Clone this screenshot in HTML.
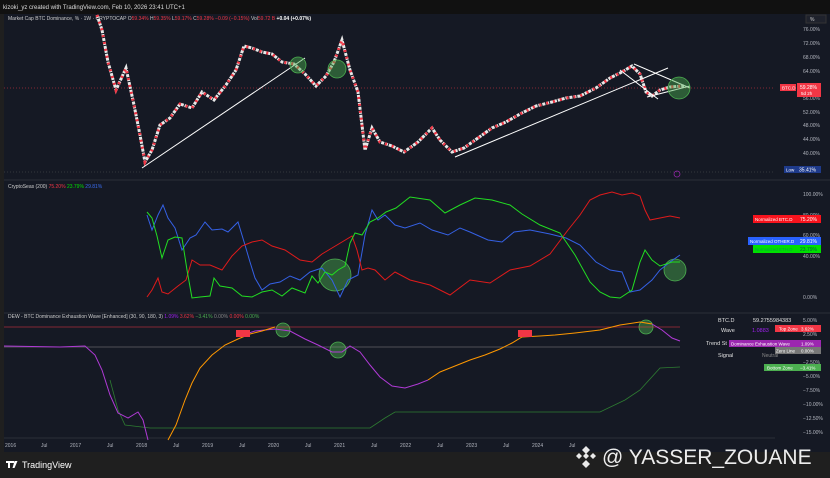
<!DOCTYPE html><html><head><style>
body{margin:0;width:830px;height:478px;background:#1e1e1e;overflow:hidden;font-family:"Liberation Sans",sans-serif}
svg{position:absolute;left:0;top:0}
text{font-family:"Liberation Sans",sans-serif}
</style></head><body>
<svg width="830" height="478" viewBox="0 0 830 478">
<rect x="0" y="0" width="830" height="478" fill="#1f1f1f"/>
<rect x="0" y="0" width="830" height="14" fill="#111"/>
<text x="3" y="9" font-size="6" fill="#ddd">kizoki_yz created with TradingView.com, Feb 10, 2026 23:41 UTC+1</text>
<rect x="4" y="14" width="826" height="438" fill="#151924"/>
<line x1="4" y1="180" x2="830" y2="180" fill="none" stroke="#2a2e39" stroke-width="1"/>
<line x1="4" y1="313" x2="830" y2="313" stroke="#2a2e39"/>
<line x1="4" y1="438" x2="775" y2="438" stroke="#2a2e39"/>
<text x="8" y="20" font-size="5" fill="#ccc">Market Cap BTC Dominance, % · 1W · CRYPTOCAP  <tspan fill="#ccc">O</tspan><tspan fill="#f23645">59.34%</tspan> H<tspan fill="#f23645">59.35%</tspan> L<tspan fill="#f23645">59.17%</tspan> C<tspan fill="#f23645">59.28%</tspan> <tspan fill="#f23645">−0.09 (−0.15%)</tspan> Vol<tspan fill="#f23645">59.72 B</tspan> <tspan fill="#fff" font-weight="bold">+0.04 (+0.07%)</tspan></text>
<rect x="806" y="15" width="20" height="8" fill="#1f222c" stroke="#333"/><text x="810" y="21" font-size="5" fill="#ccc">%</text>
<g font-size="5" fill="#b2b5be">
<text x="803" y="31">76.00%</text><text x="803" y="45">72.00%</text><text x="803" y="59">68.00%</text><text x="803" y="73">64.00%</text><text x="803" y="100">56.00%</text><text x="803" y="114">52.00%</text><text x="803" y="127">48.00%</text><text x="803" y="141">44.00%</text><text x="803" y="155">40.00%</text>
<text x="803" y="196">100.00%</text><text x="803" y="217">80.00%</text><text x="803" y="237">60.00%</text><text x="803" y="258">40.00%</text><text x="803" y="299">0.00%</text>
<text x="803" y="322">5.00%</text><text x="803" y="336">2.50%</text><text x="803" y="364">−2.50%</text><text x="803" y="378">−5.00%</text><text x="803" y="392">−7.50%</text><text x="803" y="406">−10.00%</text><text x="803" y="420">−12.50%</text><text x="803" y="434">−15.00%</text>
</g>
<line x1="4" y1="88" x2="775" y2="88" stroke="#f23645" stroke-width="0.5" stroke-dasharray="1,2"/>
<line x1="4" y1="172" x2="775" y2="172" stroke="#555" stroke-width="0.5" stroke-dasharray="1,2"/>
<rect x="780" y="84" width="16" height="7" fill="#f23645"/><text x="782" y="89.5" font-size="4.5" fill="#fff">BTC.D</text>
<rect x="797" y="83" width="24" height="14" fill="#f23645"/><text x="800" y="89" font-size="5" fill="#fff">59.28%</text><text x="801" y="95" font-size="4.5" fill="#fff">5d 2h</text>
<rect x="784" y="166" width="13" height="7" fill="#1e3a8a"/><text x="786" y="171.5" font-size="4.5" fill="#fff">Low</text>
<rect x="797" y="166" width="24" height="7" fill="#1e3a8a"/><text x="799" y="171.5" font-size="5" fill="#fff">35.41%</text>
<circle cx="677" cy="174" r="3" fill="none" stroke="#9c27b0" stroke-width="0.7"/>
<polyline fill="none" stroke="#e8e8e8" stroke-width="3" stroke-dasharray="3,1" points="97,15 102,30 108,62 116,90 126,68 134,105 140,135 145,162 152,150 160,125 170,118 180,104 192,108 202,92 214,100 226,85 236,70 244,46 252,48 262,52 272,54 282,62 294,64 305,74 316,86 326,76 334,62 342,40 350,70 358,92 365,150 372,128 380,142 392,146 404,152 418,142 432,128 440,140 452,152 464,148 478,138 492,128 506,122 520,114 536,106 552,102 566,98 580,96 596,88 610,78 622,72 632,66 640,74 646,92 652,96 660,90 670,87 684,86"/>
<polyline fill="none" stroke="#f23645" stroke-width="3" stroke-dasharray="2,5" points="97,15 102,30 108,62 116,90 126,68 134,105 140,135 145,162 152,150 160,125 170,118 180,104 192,108 202,92 214,100 226,85 236,70 244,46 252,48 262,52 272,54 282,62 294,64 305,74 316,86 326,76 334,62 342,40 350,70 358,92 365,150 372,128 380,142 392,146 404,152 418,142 432,128 440,140 452,152 464,148 478,138 492,128 506,122 520,114 536,106 552,102 566,98 580,96 596,88 610,78 622,72 632,66 640,74 646,92 652,96 660,90 670,87 684,86"/>
<g stroke="#fff" stroke-width="1" fill="none">
<line x1="142" y1="168" x2="305" y2="58"/>
<line x1="455" y1="157" x2="668" y2="68"/>
<line x1="634" y1="64" x2="690" y2="88"/>
<line x1="620" y1="70" x2="658" y2="99"/>
<line x1="647" y1="97" x2="690" y2="86"/>
</g>
<g fill="#4caf50" fill-opacity="0.45" stroke="#4caf50" stroke-width="0.8">
<circle cx="298" cy="65" r="8"/><circle cx="337" cy="69" r="9"/><circle cx="679" cy="88" r="11"/>
<circle cx="335" cy="275" r="16"/><circle cx="675" cy="270" r="11"/>
<circle cx="283" cy="330" r="7"/><circle cx="338" cy="350" r="8"/><circle cx="646" cy="327" r="7"/>
</g>
<text x="8" y="188" font-size="5" fill="#ccc">CryptoSeas (200)  <tspan fill="#f23645">75.20%</tspan> <tspan fill="#00e000">23.79%</tspan> <tspan fill="#3a6df0">29.81%</tspan></text>
<polyline fill="none" stroke="#3561e6" stroke-width="1" points="147,215 152,230 158,215 163,205 168,218 175,228 182,250 190,238 196,235 205,222 212,230 222,229 228,232 238,222 245,245 250,262 255,278 262,290 270,284 280,282 290,276 300,280 310,272 322,268 332,280 340,297 348,280 358,275 365,235 372,210 378,220 385,215 395,225 405,228 420,223 432,230 448,235 460,228 470,232 488,240 502,242 514,232 530,230 550,234 566,238 580,245 596,262 610,270 622,272 630,292 640,290 652,280 660,270 670,262 680,255"/>
<polyline fill="none" stroke="#e01b1b" stroke-width="1" points="147,297 152,290 158,278 162,292 168,294 178,286 186,280 192,260 200,265 210,265 222,270 232,256 242,246 252,242 262,240 272,246 285,250 300,260 312,262 322,254 332,248 342,242 352,236 357,250 362,270 368,268 375,270 385,280 395,272 410,280 430,285 450,295 470,280 490,283 510,270 530,266 550,254 568,230 580,215 590,200 600,195 612,192 622,195 632,193 640,196 645,210 650,220 660,218 670,216 680,218"/>
<polyline fill="none" stroke="#22dd22" stroke-width="1" points="147,212 152,218 157,236 162,258 168,240 175,237 182,238 187,270 192,298 200,297 210,296 214,278 220,286 232,288 242,296 252,297 262,292 272,290 282,296 292,288 305,293 312,276 318,283 325,272 332,275 338,270 345,266 350,243 355,233 362,235 370,222 378,218 386,212 396,208 410,197 430,200 445,213 460,205 475,198 492,200 510,205 522,214 540,225 560,233 575,255 590,282 600,292 610,297 620,298 632,290 640,262 645,250 652,260 660,266 672,262 680,262"/>
<rect x="748" y="237" width="50" height="8" fill="#2962ff"/><text x="750" y="243" font-size="4.5" fill="#fff">Normalized OTHER.D</text>
<rect x="798" y="237" width="23" height="8" fill="#2962ff"/><text x="800" y="243" font-size="5" fill="#fff">29.81%</text>
<rect x="753" y="245" width="45" height="8" fill="#00e000"/><text x="755" y="251" font-size="4.5" fill="#0a3">Normalized ETH.D</text>
<rect x="798" y="245" width="23" height="8" fill="#00e000"/><text x="800" y="251" font-size="5" fill="#063">23.79%</text>
<rect x="753" y="215" width="45" height="8" fill="#f7131d"/><text x="755" y="221" font-size="4.5" fill="#fff">Normalized BTC.D</text>
<rect x="798" y="215" width="23" height="8" fill="#f7131d"/><text x="800" y="221" font-size="5" fill="#fff">75.20%</text>
<text x="8" y="318" font-size="5" fill="#ccc">DEW - BTC Dominance Exhaustion Wave [Enhanced] (30, 90, 180, 3)  <tspan fill="#a020f0">1.09%</tspan> <tspan fill="#f23645">3.62%</tspan> <tspan fill="#4caf50">−3.41%</tspan> <tspan fill="#888">0.00%</tspan> <tspan fill="#f23645">0.00%</tspan> <tspan fill="#4caf50">0.00%</tspan></text>
<line x1="4" y1="327" x2="680" y2="327" stroke="#f23645" stroke-width="0.6"/>
<line x1="4" y1="347" x2="680" y2="347" stroke="#888" stroke-width="0.6"/>
<polyline fill="none" stroke="#2e7d32" stroke-width="0.8" points="110,380 118,410 125,425 150,428 370,428 385,418 395,412 420,412 600,412 625,400 640,390 660,368 680,367"/>
<polyline fill="none" stroke="#b03ad6" stroke-width="1" points="4,346 60,347 85,346 95,355 102,370 110,395 118,413 128,418 138,412 143,420 148,440"/>
<polyline fill="none" stroke="#b03ad6" stroke-width="1" points="240,336 255,331 275,329 290,331 305,339 318,345 332,352 342,352 350,346 360,352 370,365 380,377 392,386 405,388 418,384 428,380"/>
<polyline fill="none" stroke="#ff9800" stroke-width="1" points="168,440 176,425 185,400 192,383 200,368 212,355 225,345 238,339 250,334 262,331 275,327"/>
<polyline fill="none" stroke="#ff9800" stroke-width="1" points="428,380 440,372 455,366 470,360 485,355 500,349 512,343 522,337 540,336 555,335 575,333 600,330 620,325 640,322 652,324"/>
<polyline fill="none" stroke="#b03ad6" stroke-width="1" points="652,324 662,330 672,338 680,341"/>
<rect x="236" y="330" width="14" height="7" fill="#f23645"/><rect x="518" y="330" width="14" height="7" fill="#f23645"/>
<g font-size="5.5" fill="#e0e0e0">
<text x="718" y="322">BTC.D</text><text x="753" y="322">59.2755984383</text>
<text x="721" y="332">Wave</text><text x="752" y="332" fill="#a020f0">1.0883</text>
<text x="706" y="345">Trend St</text><text x="718" y="357">Signal</text><text x="762" y="357" fill="#888" font-size="5">Neutral</text>
</g>
<rect x="775" y="325" width="33" height="7" fill="#f23645"/><text x="779" y="330.5" font-size="4.5" fill="#fff">Top Zone</text>
<rect x="798" y="325" width="23" height="7" fill="#f23645"/><text x="801" y="330.5" font-size="4.5" fill="#fff">3.62%</text>
<rect x="729" y="340" width="69" height="7" fill="#9c27b0"/><text x="731" y="345.5" font-size="4.5" fill="#fff">Dominance Exhaustion Wave</text>
<rect x="798" y="340" width="23" height="7" fill="#9c27b0"/><text x="801" y="345.5" font-size="4.5" fill="#fff">1.09%</text>
<rect x="775" y="347" width="23" height="7" fill="#777"/><text x="776" y="352.5" font-size="4.5" fill="#fff">Zero Line</text>
<rect x="798" y="347" width="23" height="7" fill="#777"/><text x="801" y="352.5" font-size="4.5" fill="#fff">0.00%</text>
<rect x="764" y="364" width="34" height="7" fill="#4caf50"/><text x="767" y="369.5" font-size="4.5" fill="#fff">Bottom Zone</text>
<rect x="798" y="364" width="23" height="7" fill="#4caf50"/><text x="800" y="369.5" font-size="4.5" fill="#fff">−3.41%</text>
<g font-size="5" fill="#b2b5be">
<text x="5" y="447">2016</text><text x="41" y="447">Jul</text><text x="70" y="447">2017</text><text x="107" y="447">Jul</text><text x="136" y="447">2018</text><text x="173" y="447">Jul</text><text x="202" y="447">2019</text><text x="239" y="447">Jul</text><text x="268" y="447">2020</text><text x="305" y="447">Jul</text><text x="334" y="447">2021</text><text x="371" y="447">Jul</text><text x="400" y="447">2022</text><text x="437" y="447">Jul</text><text x="466" y="447">2023</text><text x="503" y="447">Jul</text><text x="532" y="447">2024</text><text x="569" y="447">Jul</text>
</g>
<rect x="0" y="452" width="830" height="26" fill="#1f1f1f"/>
<path d="M6 461h6v2h-2v5h-2v-5h-2z M12 461h2v2h-2z M14.5 461h3l-3 7h-2z" fill="#fff"/>
<text x="22" y="468" font-size="9" fill="#fff">TradingView</text>
<g fill="#fff" opacity="0.9"><path d="M586 446l4 4-4 4-4-4z M579 453l3 3-3 3-3-3z M593 453l3 3-3 3-3-3z M586 460l4 4-4 4-4-4z M586 453l3 3-3 3-3-3z"/></g>
<text x="602" y="464" font-size="21" fill="#fff" fill-opacity="0.92">@ YASSER_ZOUANE</text>
</svg>
</body></html>
